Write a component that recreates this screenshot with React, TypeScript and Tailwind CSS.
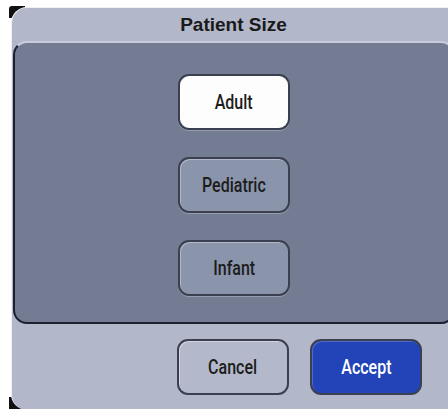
import React from 'react';

type Choice = 'Adult' | 'Pediatric' | 'Infant';

function Label({ children }: { children: React.ReactNode }) {
  return (
    <span
      className="inline-block scale-x-[0.8] text-[20px] font-medium leading-none"
      style={{ fontFamily: 'Roboto, "Liberation Sans", sans-serif' }}
    >
      {children}
    </span>
  );
}

function SizeButton({
  label,
  selected,
  onClick,
}: {
  label: Choice;
  selected: boolean;
  onClick: () => void;
}) {
  return (
    <button
      onClick={onClick}
      className={`flex h-[56px] w-[112px] items-center justify-center rounded-[11px] border-2 border-[#3b4050] text-[#1c1c1c] shadow-[inset_1px_1px_0_rgba(255,255,255,0.35),0_1px_0_rgba(255,255,255,0.25)] ${
        selected ? 'bg-[#fdfdfd]' : 'bg-[#8a94ab]'
      }`}
    >
      <Label>{label}</Label>
    </button>
  );
}

export default function App() {
  const [size, setSize] = React.useState<Choice>('Adult');
  const choices: Choice[] = ['Adult', 'Pediatric', 'Infant'];

  return (
    <div
      className="relative h-[409px] w-[448px] overflow-hidden bg-white pl-[11px] pt-[7px]"
      style={{ fontFamily: '"Liberation Sans", Arial, sans-serif' }}
    >
      {/* dark corners showing behind the rounded dialog */}
      <div className="absolute left-[9px] top-[6px] h-[12px] w-[16px] rounded-tl-[3px] bg-[#111]" />
      <div className="absolute bottom-0 left-[9px] h-[12px] w-[14px] bg-[#111]" />

      <div className="relative flex h-[403px] w-[444px] flex-col rounded-l-[16px] border-t border-l border-[#eef0f6] bg-[#b2b7c9]">
        <div className="flex h-[33px] items-center justify-center">
          <span className="text-[19px] font-bold leading-none text-[#1a1a1a]">Patient Size</span>
        </div>

        <div className="ml-[1px] flex h-[283px] w-[442px] flex-col items-center gap-[27px] rounded-[14px] border-2 border-t-[#c9cddb] border-l-[#1d2030] border-b-[#1d2030] border-r-[#1d2030] bg-[#737c93] pt-[31px]">
          {choices.map((c) => (
            <SizeButton key={c} label={c} selected={size === c} onClick={() => setSize(c)} />
          ))}
        </div>

        <div className="mt-[15px] flex gap-[21px] pl-[165px]">
          <button className="flex h-[56px] w-[112px] items-center justify-center rounded-[11px] border-2 border-[#3b4050] bg-[#b3b8ca] text-[#1c1c1c] shadow-[inset_1px_1px_0_rgba(255,255,255,0.4)]">
            <Label>Cancel</Label>
          </button>
          <button className="flex h-[56px] w-[112px] items-center justify-center rounded-[11px] border-2 border-[#3b4050] bg-[#2244b8] text-white shadow-[inset_1px_1px_0_rgba(255,255,255,0.2)]">
            <Label>Accept</Label>
          </button>
        </div>
      </div>
    </div>
  );
}
